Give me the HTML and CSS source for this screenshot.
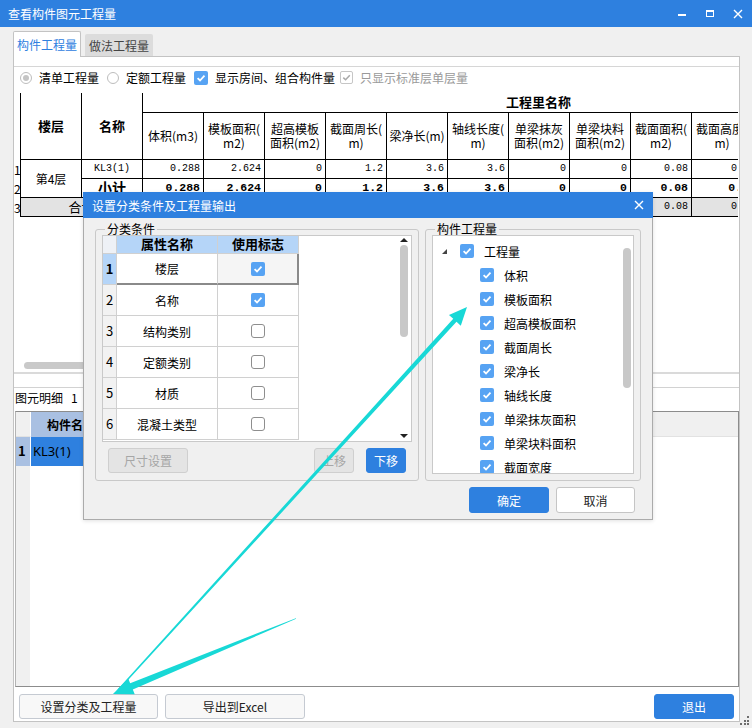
FILE: index.html
```html
<!DOCTYPE html>
<html lang="zh-CN">
<head>
<meta charset="utf-8">
<title>查看构件图元工程量</title>
<link rel="stylesheet" href="styles.css">
</head>
<body>
<div class="win">
  <div class="titlebar">
    <span class="title">查看构件图元工程量</span>
    <div class="ctrls">
      <div class="ctrl"><svg width="10" height="10" viewBox="0 0 10 10"><rect x="1" y="5" width="8" height="2" fill="#fff"/></svg></div>
      <div class="ctrl"><svg width="10" height="10" viewBox="0 0 10 10"><rect x="1.5" y="1.5" width="7" height="6" fill="none" stroke="#fff" stroke-width="1"/><rect x="1" y="1" width="8" height="2" fill="#fff"/></svg></div>
      <div class="ctrl"><svg width="10" height="10" viewBox="0 0 10 10"><path d="M1 1 L9 9 M9 1 L1 9" stroke="#fff" stroke-width="1.4"/></svg></div>
    </div>
  </div>

  <div class="tabs">
    <div class="tab active">构件工程量</div>
    <div class="tab">做法工程量</div>
  </div>

  <div class="panel">
    <div class="opts-box">
      <div class="options">
        <div class="opt"><span class="radio on"></span><span>清单工程量</span></div>
        <div class="opt"><span class="radio"></span><span>定额工程量</span></div>
        <div class="opt opt-3"><span class="cb"><svg width="14" height="14" viewBox="0 0 14 14"><path d="M3.6 7.2 L6 9.5 L10.5 4.6" fill="none" stroke="#fff" stroke-width="1.8"/></svg></span><span>显示房间、组合构件量</span></div>
        <div class="opt dis"><span class="cb cb-dis"><svg width="11" height="11" viewBox="0 0 11 11"><path d="M2.3 5.6 L4.6 7.8 L8.8 3.2" fill="none" stroke="#a9a9a9" stroke-width="1.5"/></svg></span><span>只显示标准层单层量</span></div>
      </div>
    </div>

    <div class="qty-wrap">
      <div class="qty">
        <div class="rh rhh"></div>
        <div class="h1 r2">楼层</div>
        <div class="h1 r2">名称</div>
        <div class="h1 hall">工程里名称</div>
        <div class="h2">体积(m3)</div>
        <div class="h2">模板面积(<br>m2)</div>
        <div class="h2">超高模板<br>面积(m2)</div>
        <div class="h2">截面周长(<br>m)</div>
        <div class="h2">梁净长(m)</div>
        <div class="h2">轴线长度(<br>m)</div>
        <div class="h2">单梁抹灰<br>面积(m2)</div>
        <div class="h2">单梁块料<br>面积(m2)</div>
        <div class="h2">截面面积(<br>m2)</div>
        <div class="h2">截面高度(<br>m)</div>

        <div class="rh">1</div>
        <div class="floor r2">第4层</div>
        <div class="mono">KL3(1)</div>
        <div class="num">0.288</div><div class="num">2.624</div><div class="num">0</div><div class="num">1.2</div><div class="num">3.6</div><div class="num">3.6</div><div class="num">0</div><div class="num">0</div><div class="num">0.08</div><div class="num">0.4</div>

        <div class="rh">2</div>
        <div class="sub">小计</div>
        <div class="num b">0.288</div><div class="num b">2.624</div><div class="num b">0</div><div class="num b">1.2</div><div class="num b">3.6</div><div class="num b">3.6</div><div class="num b">0</div><div class="num b">0</div><div class="num b">0.08</div><div class="num b">0.4</div>

        <div class="rh">3</div>
        <div class="total c2">合计</div>
        <div class="num g">0.288</div><div class="num g">2.624</div><div class="num g">0</div><div class="num g">1.2</div><div class="num g">3.6</div><div class="num g">3.6</div><div class="num g">0</div><div class="num g">0</div><div class="num g">0.08</div><div class="num g">0.4</div>
      </div>
    </div>

    <div class="hscroll"><div class="hthumb"></div></div>
    <div class="splitter"></div>
    <div class="detail-label">图元明细<span class="cnt">1</span><span class="cnt2">(共1个图元)</span></div>

    <div class="detail">
      <div class="d-rhh"></div>
      <div class="d-hname">构件名称</div>
      <div class="d-hrest"></div>
      <div class="d-rh1">1</div>
      <div class="d-sel">KL3(1)</div>
      <div class="d-blank"></div>
      <div class="d-rhrest"></div>
      <div class="d-blank2"></div>
    </div>

    <div class="footer">
      <div class="btn w139">设置分类及工程量</div>
      <div class="btn w140">导出到Excel</div>
      <div class="btn btn-blue w80 push">退出</div>
    </div>
  </div>

  <div class="grip">
    <span></span><span></span><span></span><span></span><span></span><span></span>
  </div>

  <div class="dlg">
    <div class="dlg-title">
      <span>设置分类条件及工程量输出</span>
      <div class="dlg-close"><svg width="10" height="10" viewBox="0 0 10 10"><path d="M1 1 L9 9 M9 1 L1 9" stroke="#fff" stroke-width="1.4"/></svg></div>
    </div>
    <div class="dlg-body">
      <div class="gb-row">
        <fieldset class="gb gb-left">
          <legend>分类条件</legend>
          <div class="list1">
            <div class="pgrid">
              <div class="p-rhh"></div>
              <div class="ph">属性名称</div>
              <div class="ph">使用标志</div>

              <div class="p-rh sel">1</div>
              <div class="pc cur">楼层</div>
              <div class="pc cur curlast"><span class="cb"><svg width="14" height="14" viewBox="0 0 14 14"><path d="M3.6 7.2 L6 9.5 L10.5 4.6" fill="none" stroke="#fff" stroke-width="1.8"/></svg></span></div>

              <div class="p-rh">2</div>
              <div class="pc">名称</div>
              <div class="pc"><span class="cb"><svg width="14" height="14" viewBox="0 0 14 14"><path d="M3.6 7.2 L6 9.5 L10.5 4.6" fill="none" stroke="#fff" stroke-width="1.8"/></svg></span></div>

              <div class="p-rh">3</div>
              <div class="pc">结构类别</div>
              <div class="pc"><span class="cb cb-off"></span></div>

              <div class="p-rh">4</div>
              <div class="pc">定额类别</div>
              <div class="pc"><span class="cb cb-off"></span></div>

              <div class="p-rh">5</div>
              <div class="pc">材质</div>
              <div class="pc"><span class="cb cb-off"></span></div>

              <div class="p-rh">6</div>
              <div class="pc">混凝土类型</div>
              <div class="pc"><span class="cb cb-off"></span></div>
            </div>
            <div class="vs">
              <span class="arr-up"></span>
              <span class="vthumb1"></span>
              <span class="arr-down"></span>
            </div>
          </div>
          <div class="gb-btns">
            <div class="btn btn-dis w80">尺寸设置</div>
            <div class="btn btn-dis w40 push">上移</div>
            <div class="btn btn-blue w40 ml12">下移</div>
          </div>
        </fieldset>

        <fieldset class="gb gb-right">
          <legend>构件工程量</legend>
          <div class="list2">
            <div class="tree">
              <div class="trow root"><span class="tri"></span><span class="cb"><svg width="14" height="14" viewBox="0 0 14 14"><path d="M3.6 7.2 L6 9.5 L10.5 4.6" fill="none" stroke="#fff" stroke-width="1.8"/></svg></span><span class="tl">工程量</span></div>
              <div class="trow child"><span class="cb"><svg width="14" height="14" viewBox="0 0 14 14"><path d="M3.6 7.2 L6 9.5 L10.5 4.6" fill="none" stroke="#fff" stroke-width="1.8"/></svg></span><span class="tl">体积</span></div>
              <div class="trow child"><span class="cb"><svg width="14" height="14" viewBox="0 0 14 14"><path d="M3.6 7.2 L6 9.5 L10.5 4.6" fill="none" stroke="#fff" stroke-width="1.8"/></svg></span><span class="tl">模板面积</span></div>
              <div class="trow child"><span class="cb"><svg width="14" height="14" viewBox="0 0 14 14"><path d="M3.6 7.2 L6 9.5 L10.5 4.6" fill="none" stroke="#fff" stroke-width="1.8"/></svg></span><span class="tl">超高模板面积</span></div>
              <div class="trow child"><span class="cb"><svg width="14" height="14" viewBox="0 0 14 14"><path d="M3.6 7.2 L6 9.5 L10.5 4.6" fill="none" stroke="#fff" stroke-width="1.8"/></svg></span><span class="tl">截面周长</span></div>
              <div class="trow child"><span class="cb"><svg width="14" height="14" viewBox="0 0 14 14"><path d="M3.6 7.2 L6 9.5 L10.5 4.6" fill="none" stroke="#fff" stroke-width="1.8"/></svg></span><span class="tl">梁净长</span></div>
              <div class="trow child"><span class="cb"><svg width="14" height="14" viewBox="0 0 14 14"><path d="M3.6 7.2 L6 9.5 L10.5 4.6" fill="none" stroke="#fff" stroke-width="1.8"/></svg></span><span class="tl">轴线长度</span></div>
              <div class="trow child"><span class="cb"><svg width="14" height="14" viewBox="0 0 14 14"><path d="M3.6 7.2 L6 9.5 L10.5 4.6" fill="none" stroke="#fff" stroke-width="1.8"/></svg></span><span class="tl">单梁抹灰面积</span></div>
              <div class="trow child"><span class="cb"><svg width="14" height="14" viewBox="0 0 14 14"><path d="M3.6 7.2 L6 9.5 L10.5 4.6" fill="none" stroke="#fff" stroke-width="1.8"/></svg></span><span class="tl">单梁块料面积</span></div>
              <div class="trow child"><span class="cb"><svg width="14" height="14" viewBox="0 0 14 14"><path d="M3.6 7.2 L6 9.5 L10.5 4.6" fill="none" stroke="#fff" stroke-width="1.8"/></svg></span><span class="tl">截面宽度</span></div>
            </div>
            <div class="vs2"><span class="vthumb2"></span></div>
          </div>
        </fieldset>
      </div>
      <div class="dlg-btns">
        <div class="btn btn-blue w80">确定</div>
        <div class="btn btn-white w79">取消</div>
      </div>
    </div>
  </div>

  <svg class="arrows" width="752" height="728" viewBox="0 0 752 728">
    <polygon fill="#18d8d6" points="117.48,689.53 453.25,318.82 448.97,314.91 467,307 460.79,325.69 456.51,321.78 118.52,690.47"/>
    <polygon fill="#18d8d6" points="295.85,618.13 130.15,683.14 128.24,678.51 113,694 134.72,694.23 132.81,689.60 296.15,618.87"/>
  </svg>
</div>
</body>
</html>
```

FILE: styles.css
```css
* { box-sizing: border-box; }

body {
  margin: 0;
  font-family: "Noto Sans CJK SC", "Noto Sans", sans-serif;
  font-size: 12px;
  line-height: 1.25;
  color: #000;
}

.win {
  position: relative;
  width: 752px;
  height: 728px;
  background: #f0f0f0;
  overflow: hidden;
}

/* title bar */
.titlebar {
  height: 27px;
  background: #2e80df;
  color: #fff;
  display: flex;
  align-items: center;
  padding-left: 8px;
}
.ctrls { margin-left: auto; display: flex; height: 27px; }
.ctrl { width: 28px; display: flex; justify-content: center; padding-top: 9px; }

/* tabs */
.tabs {
  height: 29px;
  display: flex;
  align-items: flex-end;
  gap: 4px;
  padding-left: 13px;
}
.tab {
  width: 68px;
  height: 22px;
  background: #dcdcdc;
  color: #444;
  display: flex;
  align-items: center;
  justify-content: center;
  border-radius: 2px 2px 0 0;
}
.tab.active {
  height: 26px;
  background: #fff;
  color: #2e80df;
  border: 1px solid #c3c3c3;
  border-bottom: none;
  margin-bottom: -1px;
  position: relative;
  z-index: 1;
}

/* main panel */
.panel {
  margin-left: 13px;
  width: 727px;
  height: 666px;
  border: 1px solid #c3c3c3;
  background: #fff;
  display: flex;
  flex-direction: column;
}
.opts-box { margin-top: 9px; border-top: 1px solid #d6d6d6; }
.options {
  height: 21px;
  margin-bottom: 5px;
  display: flex;
  align-items: center;
  padding-left: 6px;
}
.opt { display: flex; align-items: center; gap: 7px; margin-right: 8px; }
.opt-3 { margin-right: 5px; }
.opt.dis { color: #9a9a9a; }
.radio {
  width: 12px;
  height: 12px;
  border: 1px solid #bdbdbd;
  border-radius: 50%;
  background: #fff;
  display: flex;
  align-items: center;
  justify-content: center;
}
.radio.on::after {
  content: "";
  width: 6px;
  height: 6px;
  border-radius: 50%;
  background: #c4c4c4;
}

.cb {
  width: 14px;
  height: 14px;
  border-radius: 2px;
  background: #57a3f3;
  display: flex;
  align-items: center;
  justify-content: center;
  flex: none;
}
.cb-off { background: #fff; border: 1px solid #8e8e8e; border-radius: 3px; }
.cb-dis { width: 13px; height: 13px; background: #fff; border: 1px solid #c6c6c6; }

/* quantity table */
.qty-wrap { width: 724px; height: 269px; overflow: hidden; }
.qty {
  width: 739px;
  display: grid;
  grid-template-columns: 7px repeat(12, 61px);
  grid-template-rows: 20px 47px 19px 19px 19px;
}
.qty > div {
  border-right: 1px solid #000;
  border-bottom: 1px solid #000;
  display: flex;
  align-items: center;
  justify-content: center;
  text-align: center;
  white-space: nowrap;
  overflow: hidden;
}
.qty > .rh { border-bottom: none; justify-content: flex-start; font-size: 12px; }
.qty > .rhh { grid-row: span 2; }
.r2 { grid-row: span 2; }
.c2 { grid-column: span 2; }
.h1 { font-weight: bold; font-size: 13px; }
.qty > .hall { grid-column: 4 / span 10; justify-content: flex-start; padding-left: 363px; }
.h2 { line-height: 14px; font-size: 12px; }
.floor { font-size: 12px; }
.mono { font-family: "Liberation Mono", monospace; font-size: 10px; }
.sub { font-weight: bold; font-size: 14px; }
.qty > .num {
  justify-content: flex-end;
  padding-right: 3px;
  font-family: "Liberation Mono", monospace;
  font-size: 10px;
}
.qty > .num.b { font-weight: bold; font-size: 11.5px; }
.qty > .g, .qty > .total { background: #e3e3e3; }
.total { font-size: 13px; }

.hscroll { height: 10px; padding-left: 10px; display: flex; align-items: flex-start; }
.hthumb { width: 276px; height: 7px; border-radius: 4px; background: #c9c9c9; }
.splitter { height: 16px; border-top: 2px solid #dadada; border-bottom: 1px solid #d2d2d2; }
.detail-label { height: 23px; padding: 1px 0 0 1px; line-height: 17px; display: flex; }
.cnt { margin-left: 8px; }
.cnt2 { margin-left: 5px; color: #a03a10; }

/* detail table */
.detail {
  margin-left: 1px;
  width: 724px;
  height: 276px;
  border: 1px solid #8c8c8c;
  border-left-color: #b4b4b4;
  display: grid;
  grid-template-columns: 15px 80px 1fr;
  grid-template-rows: 25px 29px 1fr;
  background: #fff;
}
.d-rhh, .d-hrest { background: #f0f0f0; border-bottom: 1px solid #e2e2e2; }
.d-rhh { border-right: 1px solid #fff; }
.d-hname {
  background: #a9c0e2;
  font-weight: bold;
  display: flex;
  align-items: center;
  justify-content: center;
}
.d-rh1 {
  background: #a9c0e2;
  font-weight: bold;
  font-size: 13px;
  display: flex;
  align-items: center;
  padding-left: 2px;
  border-right: 1px solid #fff;
}
.d-sel {
  background: #2e80df;
  font-family: "Noto Sans", sans-serif;
  font-size: 13px;
  display: flex;
  align-items: center;
  padding-left: 2px;
}
.d-rhrest { background: #f0f0f0; border-right: 1px solid #fff; }
.d-blank2 { grid-column: span 2; }

/* footer */
.footer {
  flex: 1;
  display: flex;
  align-items: flex-start;
  gap: 7px;
  padding: 7px 5px 0 5px;
}
.btn {
  height: 25px;
  border: 1px solid #c5cad2;
  border-radius: 3px;
  background: #f8f8f8;
  color: #222;
  display: flex;
  align-items: center;
  justify-content: center;
  flex: none;
}
.btn-blue { background: #2e80df; border-color: #2e80df; color: #fff; }
.btn-dis { background: #e4e4e4; border-color: #cfcfcf; color: #a6a6a6; }
.btn-white { background: #fff; border-color: #c5c5c5; }
.w139 { width: 139px; }
.w140 { width: 140px; }
.w80 { width: 80px; }
.w79 { width: 79px; }
.w40 { width: 40px; }
.push { margin-left: auto; }
.ml12 { margin-left: 12px; }

.grip {
  position: absolute;
  right: 3px;
  bottom: 3px;
  width: 9px;
  height: 9px;
  display: grid;
  grid-template-columns: repeat(3, 2px);
  grid-template-rows: repeat(3, 2px);
  gap: 1.5px;
  direction: rtl;
}
.grip span { width: 2px; height: 2px; background: #6e6e6e; }
.grip span:nth-child(1) { grid-row: 1; grid-column: 1; }
.grip span:nth-child(2) { grid-row: 2; grid-column: 1; }
.grip span:nth-child(3) { grid-row: 2; grid-column: 2; }
.grip span:nth-child(4) { grid-row: 3; grid-column: 1; }
.grip span:nth-child(5) { grid-row: 3; grid-column: 2; }
.grip span:nth-child(6) { grid-row: 3; grid-column: 3; }

/* dialog */
.dlg {
  position: absolute;
  left: 83px;
  top: 192px;
  width: 570px;
  height: 328px;
  z-index: 5;
  display: flex;
  flex-direction: column;
  box-shadow: 0 1px 4px rgba(0, 0, 0, 0.12);
}
.dlg-title {
  height: 26px;
  flex: none;
  background: #2e80df;
  color: #fff;
  display: flex;
  align-items: center;
  padding-left: 9px;
  padding-right: 1px;
}
.dlg-close { margin-left: auto; width: 26px; display: flex; justify-content: center; }
.dlg-body {
  flex: 1;
  background: #f0f0f0;
  border: 1px solid #ababab;
  border-top: none;
  padding: 5px 11px 0 11px;
}
.gb-row { display: flex; gap: 6px; }
fieldset.gb {
  margin: 0;
  padding: 0 6px 6px 6px;
  border: 1px solid #c9c9c9;
  border-radius: 3px;
  min-width: 0;
}
.gb-left { width: 324px; }
.gb-right { width: 216px; }
.gb legend {
  padding: 0 2px;
  margin-left: 3px;
  line-height: 12px;
  font-size: 12px;
}
.list1 {
  height: 207px;
  border: 1px solid #c9c9c9;
  background: #fff;
  display: flex;
}
.pgrid {
  display: grid;
  grid-template-columns: 14px 101px 81px;
  grid-template-rows: 18px repeat(6, 31px);
  align-self: flex-start;
}
.pgrid > div {
  border-right: 1px solid #d0d0d0;
  border-bottom: 1px solid #d0d0d0;
  display: flex;
  align-items: center;
  justify-content: center;
}
.pgrid > .p-rhh { background: #eef1f6; }
.pgrid > .ph { background: #b5d5f8; font-weight: bold; font-size: 13px; }
.pgrid > .p-rh { background: #f2f2f2; font-size: 13px; }
.pgrid > .p-rh.sel { background: #b5d5f8; font-weight: bold; }
.pgrid > .pc { font-size: 12px; }
.pgrid > .cur { border-bottom: 2px solid #8a8a8a; }
.pgrid > .curlast { border-right: 2px solid #8a8a8a; background: #f5f5f5; }

.vs {
  margin-left: auto;
  margin-right: 3px;
  width: 8px;
  display: flex;
  flex-direction: column;
  align-items: center;
}
.arr-up {
  margin-top: 2px;
  width: 0;
  height: 0;
  border-left: 4px solid transparent;
  border-right: 4px solid transparent;
  border-bottom: 4px solid #222;
}
.vthumb1 { margin-top: 3px; width: 8px; height: 92px; border-radius: 4px; background: #c8c8c8; }
.arr-down {
  margin-top: auto;
  margin-bottom: 3px;
  width: 0;
  height: 0;
  border-left: 4px solid transparent;
  border-right: 4px solid transparent;
  border-top: 4px solid #222;
}
.gb-btns { display: flex; margin-top: 6px; padding: 0 6px; margin-bottom: 1px; }

.list2 {
  height: 239px;
  border: 1px solid #c9c9c9;
  background: #fff;
  display: flex;
  overflow: hidden;
}
.tree { flex: 1; padding-top: 3px; }
.trow { height: 24px; display: flex; align-items: center; }
.trow.root { padding-left: 9px; }
.trow.root .cb { margin-left: 13px; }
.trow.child { padding-left: 47px; }
.tl { margin-left: 10px; }
.tri {
  width: 0;
  height: 0;
  border-left: 5px solid transparent;
  border-bottom: 5px solid #444;
}
.vs2 { width: 8px; margin-right: 2px; padding-top: 12px; }
.vthumb2 { display: block; width: 8px; height: 140px; border-radius: 4px; background: #c8c8c8; }

.dlg-btns {
  display: flex;
  justify-content: flex-end;
  gap: 7px;
  margin-top: 6px;
  padding-right: 6px;
}
.dlg-btns .btn { height: 26px; }

.arrows { position: absolute; left: 0; top: 0; z-index: 10; pointer-events: none; }
```
